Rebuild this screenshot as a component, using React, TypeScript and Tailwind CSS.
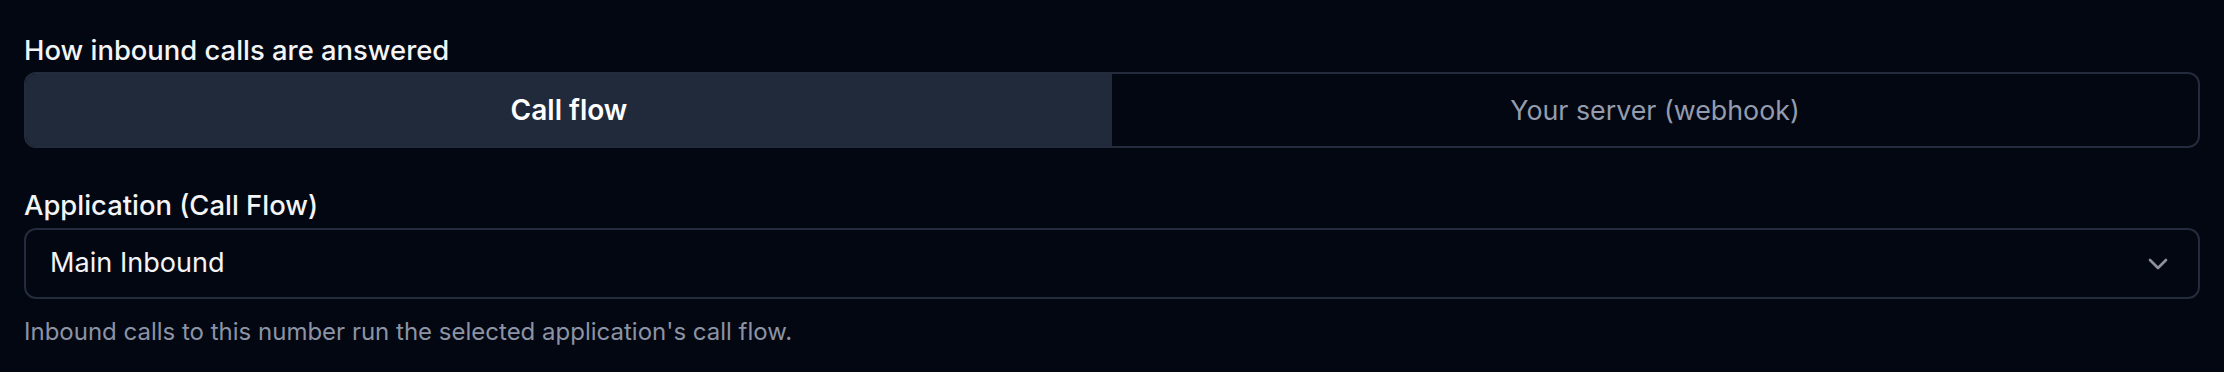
import React, { useState } from 'react';
import { ChevronDown } from 'lucide-react';

type Mode = 'flow' | 'webhook';

const font = { fontFamily: 'Inter, "Noto Sans", sans-serif' };

export default function App() {
    const [mode, setMode] = useState<Mode>('flow');

    return (
        <div className="min-h-[372px] w-full bg-[#030712] px-[24px] pt-[30px] text-white" style={font}>
            {/* Modo de respuesta */}
            <label className="mb-[2px] block text-[27.4px] leading-[40px] font-medium text-[#f3f4f6]">
                How inbound calls are answered
            </label>
            <div className="flex h-[76px] overflow-hidden rounded-[12px] border-2 border-[#232b3c]">
                <button
                    onClick={() => setMode('flow')}
                    className={`flex-1 ${mode === 'flow' ? 'bg-[#212a3b] text-[28px] font-semibold text-white' : 'text-[26.8px] text-[#949cae]'}`}
                >
                    Call flow
                </button>
                <button
                    onClick={() => setMode('webhook')}
                    className={`flex-1 ${mode === 'webhook' ? 'bg-[#212a3b] text-[28px] font-semibold text-white' : 'text-[26.8px] text-[#949cae]'}`}
                >
                    Your server (webhook)
                </button>
            </div>

            {/* Aplicación */}
            <label className="mt-[37px] mb-[3px] block text-[27.4px] leading-[40px] font-medium text-[#f3f4f6]">
                Application (Call Flow)
            </label>
            <div className="flex h-[71px] items-center justify-between rounded-[12px] border-2 border-[#232b3c] pr-[24px] pl-[24px]">
                <span className="text-[27.1px] text-[#f3f4f6]">Main Inbound</span>
                <ChevronDown size={32} strokeWidth={2} className="text-[#8f9099]" />
            </div>
            <p className="mt-[17px] text-[24px] leading-[32px] text-[#8b93a5]">
                Inbound calls to this number run the selected application's call flow.
            </p>
        </div>
    );
}
